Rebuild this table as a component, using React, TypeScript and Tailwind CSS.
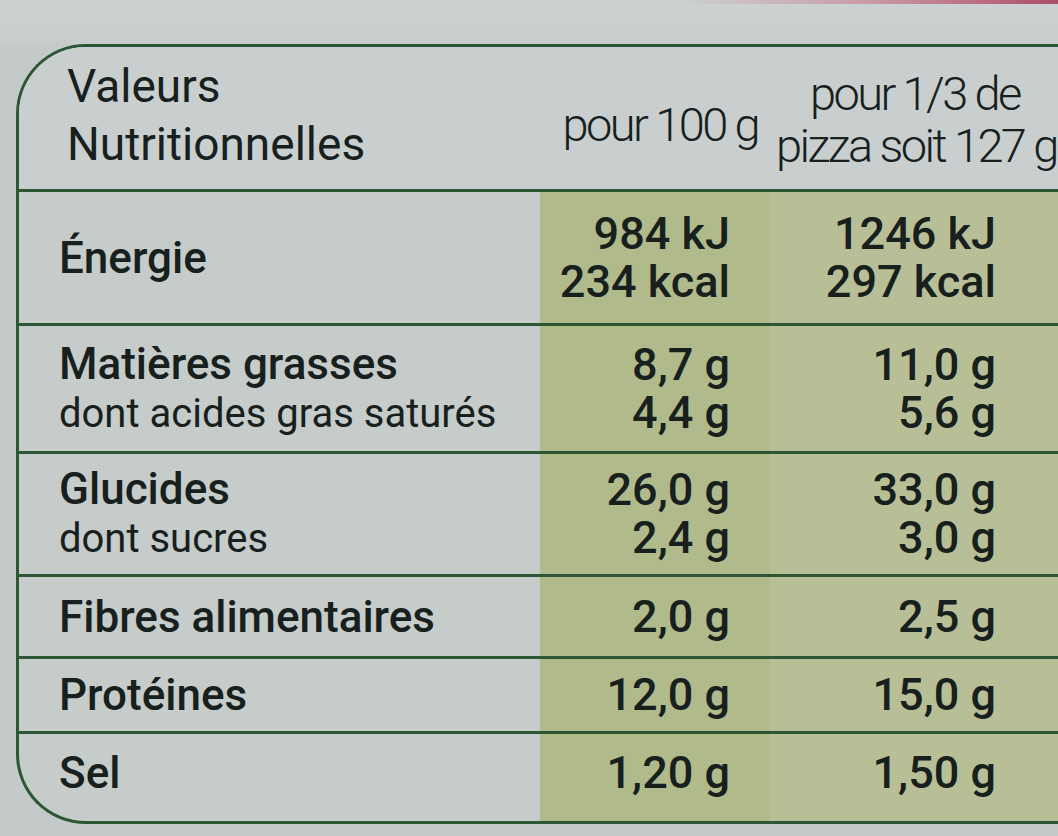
import React from "react";

type Row = {
  labels: { text: string; strong: boolean }[];
  c1: string[];
  c2: string[];
  h: string;
  extra?: string;
};

const rows: Row[] = [
  {
    labels: [{ text: "Énergie", strong: true }],
    c1: ["984 kJ", "234 kcal"],
    c2: ["1246 kJ", "297 kcal"],
    h: "h-[134px] border-b-[3px]",
  },
  {
    labels: [
      { text: "Matières grasses", strong: true },
      { text: "dont acides gras saturés", strong: false },
    ],
    c1: ["8,7 g", "4,4 g"],
    c2: ["11,0 g", "5,6 g"],
    h: "h-[128px] border-b-[3px]",
  },
  {
    labels: [
      { text: "Glucides", strong: true },
      { text: "dont sucres", strong: false },
    ],
    c1: ["26,0 g", "2,4 g"],
    c2: ["33,0 g", "3,0 g"],
    h: "h-[123px] border-b-[3px]",
  },
  {
    labels: [{ text: "Fibres alimentaires", strong: true }],
    c1: ["2,0 g"],
    c2: ["2,5 g"],
    h: "h-[82px] border-b-[3px]",
  },
  {
    labels: [{ text: "Protéines", strong: true }],
    c1: ["12,0 g"],
    c2: ["15,0 g"],
    h: "h-[75px] border-b-[3px]",
  },
  {
    labels: [{ text: "Sel", strong: true }],
    c1: ["1,20 g"],
    c2: ["1,50 g"],
    h: "h-[87px]",
    extra: "pb-[10px]",
  },
];

export default function App() {
  return (
    <div className="w-[1058px] h-[836px] overflow-hidden bg-[#c3cac9] font-[Roboto,'Liberation_Sans',sans-serif] text-[#17201d]">
      <div className="h-[44px] bg-linear-to-b from-[#cbd2d1] to-[#c6cdcc]">
        <div className="h-[4px] ml-[680px] bg-linear-to-r from-transparent via-[#c99aa6] to-[#ad4d69]" />
      </div>
      <div className="ml-[16px] w-[1060px] border-[3px] border-r-0 border-[#2c5634] rounded-tl-[70px] rounded-bl-[70px] overflow-hidden bg-[#c5ccca]">
        {/* header */}
        <div className="grid grid-cols-[521px_230px_1fr] h-[145px] border-b-[3px] border-[#2c5634] bg-[#c8cfce]">
          <div className="flex flex-col justify-center pl-[48px] pb-[6px] text-[46px] leading-[58px] font-normal">
            <span>Valeurs</span>
            <span>Nutritionnelles</span>
          </div>
          <div className="flex items-center justify-end pr-[12px] pt-[14px] text-[47px] font-light tracking-[-0.055em] whitespace-nowrap">
            pour 100 g
          </div>
          <div className="flex flex-col justify-center items-start pl-[6px] pt-[4px] text-[47px] leading-[52px] font-light tracking-[-0.055em] whitespace-nowrap">
            <span className="pl-[34px]">pour 1/3 de</span>
            <span>pizza soit 127 g</span>
          </div>
        </div>
        {rows.map((r, i) => (
          <div
            key={i}
            className={`grid grid-cols-[521px_230px_1fr] border-[#2c5634] ${r.h}`}
          >
            <div className={`flex flex-col justify-center pl-[40px] ${r.extra ?? ""}`}>
              {r.labels.map((l, j) =>
                l.strong ? (
                  <span key={j} className="text-[44px] leading-[50px] font-medium whitespace-nowrap">
                    {l.text}
                  </span>
                ) : (
                  <span key={j} className="text-[40px] leading-[50px] font-normal whitespace-nowrap">
                    {l.text}
                  </span>
                )
              )}
            </div>
            <div className={`flex flex-col justify-center items-end pr-[40px] bg-[#b1ba8b] ${r.extra ?? ""}`}>
              {r.c1.map((v, j) => (
                <span key={j} className="text-[45px] leading-[48px] font-medium whitespace-nowrap">
                  {v}
                </span>
              ))}
            </div>
            <div className={`flex flex-col justify-center items-end pr-[80px] bg-[#b8bf96] ${r.extra ?? ""}`}>
              {r.c2.map((v, j) => (
                <span key={j} className="text-[45px] leading-[48px] font-medium whitespace-nowrap">
                  {v}
                </span>
              ))}
            </div>
          </div>
        ))}
      </div>
    </div>
  );
}
